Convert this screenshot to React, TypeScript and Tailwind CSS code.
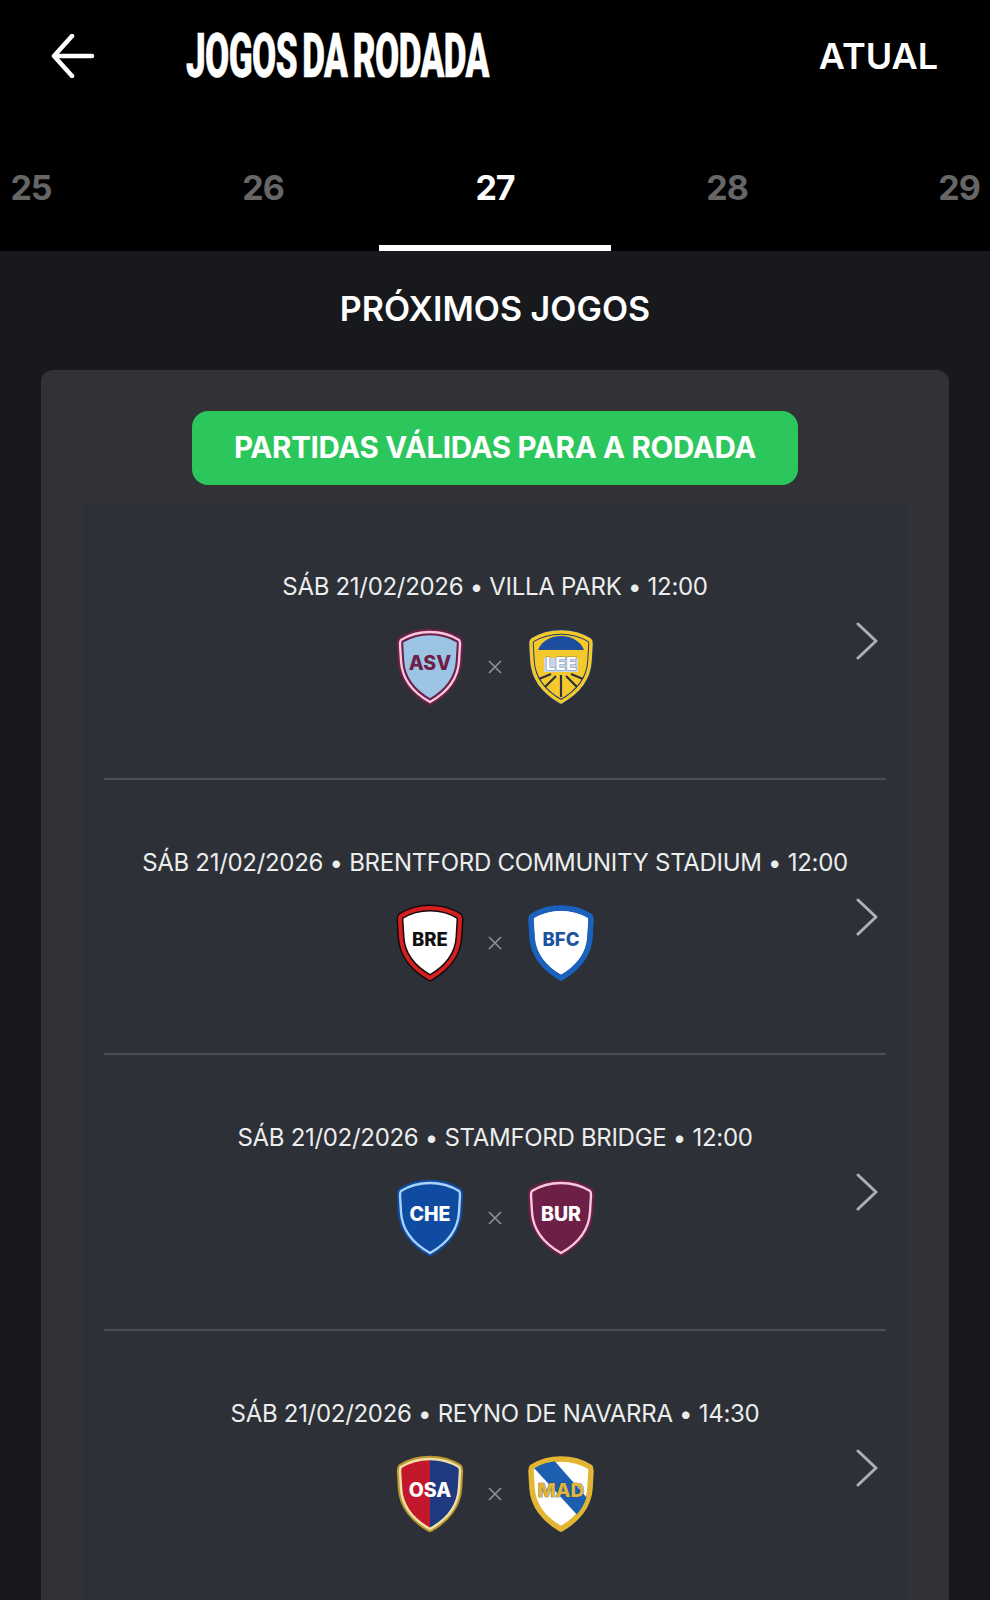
import React from "react";

const SHIELD = "M33 3 C44 3 54 6 62 11 C63 12 63 13 63 15 L62 32 C61 50 49 64 33 73 C17 64 5 50 4 32 L3 15 C3 13 3 12 4 11 C12 6 22 3 33 3 Z";

type B = {
  label: string;
  outer: string;
  ring: string;
  fill: string;
  text: string;
  stroke?: string;
  extra?: React.ReactNode;
  size?: number;
  outerW?: number;
  ringW?: number;
};

function Shield({ id, b }: { id: string; b: B }) {
  const outerW = b.outerW ?? 6.5;
  const ringW = b.ringW ?? 2.4;
  return (
    <svg width="66" height="76" viewBox="0 0 66 76" className="block overflow-visible">
      <defs>
        <clipPath id={id}><path d={SHIELD} /></clipPath>
      </defs>
      <path d={SHIELD} fill={b.fill} stroke={b.outer} strokeWidth={outerW} strokeLinejoin="round" />
      <g clipPath={`url(#${id})`}>{b.extra}</g>
      <path d={SHIELD} fill="none" stroke={b.ring} strokeWidth={ringW} strokeLinejoin="round" />
      <text
        x="33"
        y="41"
        textAnchor="middle"
        fontFamily="Inter, 'Liberation Sans', sans-serif"
        fontWeight="800"
        fontSize={b.size ?? 19.5}
        fill={b.text}
        stroke={b.stroke}
        strokeWidth={b.stroke ? 0.7 : 0}
        paintOrder="stroke"
      >
        {b.label}
      </text>
    </svg>
  );
}

const leeExtra = (
  <>
    <path d="M10 21 C14 11 24 7 33 7 C42 7 52 11 56 21 Z" fill="#1d4e9e" />
    <rect x="16" y="29" width="34" height="14" fill="#c9d6ea" />
    <path d="M33 46 L33 68 M28 47 L17 58 M38 47 L49 58 M23 45 L11 50 M43 45 L55 50" stroke="#2b3140" strokeWidth="2.2" />
  </>
);
const osaExtra = (
  <>
    <rect x="0" y="0" width="33" height="76" fill="#c3182c" />
    <rect x="33" y="0" width="33" height="76" fill="#1f3a80" />
  </>
);
const madExtra = <path d="M6 12 L24 2 L66 50 L52 62 Z" fill="#1c5fb0" />;

const rows: { info: string; home: B; away: B }[] = [
  {
    info: "SÁB 21/02/2026 • VILLA PARK • 12:00",
    home: { label: "ASV", outer: "#6d1f47", ring: "#f6c9de", fill: "#9cc4e4", text: "#6d1f47" },
    away: { label: "LEE", outer: "#1d3a6e", ring: "#f5c92c", fill: "#f5c92c", text: "#ffffff", stroke: "#1d3f80", extra: leeExtra, size: 17.5, outerW: 5.5, ringW: 3.5 },
  },
  {
    info: "SÁB 21/02/2026 • BRENTFORD COMMUNITY STADIUM • 12:00",
    home: { label: "BRE", outer: "#17090b", ring: "#d4201f", fill: "#ffffff", text: "#111111", size: 18.5, outerW: 7, ringW: 4 },
    away: { label: "BFC", outer: "#1357ae", ring: "#1a62bd", fill: "#ffffff", text: "#1d54a2", size: 18.5, outerW: 5.5, ringW: 5 },
  },
  {
    info: "SÁB 21/02/2026 • STAMFORD BRIDGE • 12:00",
    home: { label: "CHE", outer: "#0f4ba0", ring: "#a9d3f8", fill: "#0f4ba0", text: "#ffffff" },
    away: { label: "BUR", outer: "#6d1f47", ring: "#f6c9de", fill: "#6d1f47", text: "#ffffff" },
  },
  {
    info: "SÁB 21/02/2026 • REYNO DE NAVARRA • 14:30",
    home: { label: "OSA", outer: "#b8982f", ring: "#f0dfa6", fill: "#c3182c", text: "#ffffff", extra: osaExtra, outerW: 6.5, ringW: 2.5 },
    away: { label: "MAD", outer: "#e2b634", ring: "#e2b634", fill: "#ffffff", text: "#e2b634", stroke: "#1d3f80", extra: madExtra, size: 19, outerW: 5.5, ringW: 4 },
  },
];

const tabs = ["25", "26", "27", "28", "29"];
const font = "font-['Inter','Liberation_Sans',sans-serif]";

export default function App() {
  return (
    <div className={`h-[1600px] w-[990px] overflow-hidden bg-[#18191d] text-white ${font}`}>
      <header className="h-[251px] bg-black">
        <div className="flex h-[112px] items-center">
          <svg width="44" height="44" viewBox="0 0 44 44" fill="none" stroke="#fff" strokeWidth="4.5" strokeLinecap="round" strokeLinejoin="round" className="ml-[51px]">
            <path d="M41 22 H4 M21 2 L3 22 L21 42" />
          </svg>
          <h1 className="ml-[91px] w-[300px] origin-left scale-x-[0.565] whitespace-nowrap font-['Roboto','Liberation_Sans',sans-serif] text-[62px] leading-none font-black tracking-[-1px] [word-spacing:-5px] [-webkit-text-stroke:0.5px_white]">
            JOGOS DA RODADA
          </h1>
          <span className="ml-auto mr-[52px] text-[36px] leading-none font-semibold">ATUAL</span>
        </div>
        <div className="flex h-[139px] justify-center overflow-hidden">
          {tabs.map((t) => (
            <div
              key={t}
              className={`flex h-full w-[232px] shrink-0 items-center justify-center border-b-[6px] pt-[17px] text-[34px] font-bold tracking-[-1px] ${
                t === "27" ? "border-white text-white" : "border-transparent text-[#666666]"
              }`}
            >
              {t}
            </div>
          ))}
        </div>
      </header>

      <h2 className="mt-[38px] text-center text-[34px] leading-[40px] font-semibold">PRÓXIMOS JOGOS</h2>

      <section className="mx-[41px] mt-[41px] rounded-t-[12px] bg-[#313236] pt-[41px]">
        <div className="mx-auto flex h-[74px] w-[606px] items-center justify-center rounded-[16px] bg-[#2cc75c] pb-[2px] text-[29.5px] font-bold tracking-[-0.3px]">
          PARTIDAS VÁLIDAS PARA A RODADA
        </div>
        <div className="mx-[42px] mt-[19px] bg-[#2d3037]">
          {rows.map((r, i) => (
            <div key={r.info} className="relative mx-[21px] h-[275.5px] border-b-2 border-[#4a4d55] pt-[66px] last:border-b-0">
              <p className="text-center text-[24px] leading-[34px] tracking-[-0.3px] text-[#eceded]">{r.info}</p>
              <div className="mt-[25px] flex items-center justify-center">
                <Shield id={`h${i}`} b={r.home} />
                <span className="flex w-[65px] items-center justify-center">
                  <svg width="14" height="14" viewBox="0 0 14 14" stroke="#8f9196" strokeWidth="1.6">
                    <path d="M1 1 L13 13 M13 1 L1 13" />
                  </svg>
                </span>
                <Shield id={`a${i}`} b={r.away} />
              </div>
              <svg
                width="24"
                height="38"
                viewBox="0 0 24 38"
                fill="none"
                stroke="#adafb2"
                strokeWidth="3"
                strokeLinecap="round"
                strokeLinejoin="round"
                className="absolute right-[7px] top-[118px]"
              >
                <path d="M3 2 L21 19 L3 36" />
              </svg>
            </div>
          ))}
        </div>
      </section>
    </div>
  );
}
